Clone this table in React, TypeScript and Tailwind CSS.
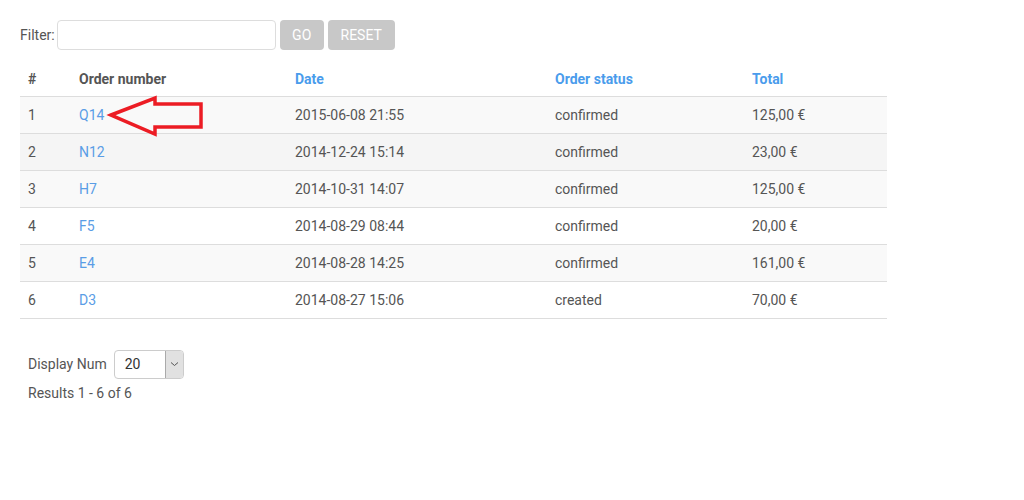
import React from "react";

const rows = [
  { n: 1, o: "Q14", d: "2015-06-08 21:55", s: "confirmed", t: "125,00 €", bg: "bg-[#f9f9f9]" },
  { n: 2, o: "N12", d: "2014-12-24 15:14", s: "confirmed", t: "23,00 €", bg: "bg-[#f5f5f5]" },
  { n: 3, o: "H7", d: "2014-10-31 14:07", s: "confirmed", t: "125,00 €", bg: "bg-[#f9f9f9]" },
  { n: 4, o: "F5", d: "2014-08-29 08:44", s: "confirmed", t: "20,00 €", bg: "bg-white" },
  { n: 5, o: "E4", d: "2014-08-28 14:25", s: "confirmed", t: "161,00 €", bg: "bg-[#f9f9f9]" },
  { n: 6, o: "D3", d: "2014-08-27 15:06", s: "created", t: "70,00 €", bg: "bg-white" },
];

export default function App() {
  return (
    <div className="relative w-[1024px] h-[500px] bg-white text-[14px] text-[#555] font-['Roboto',sans-serif]">
      <div className="pt-[20px] pl-[20px]">
        <div className="flex items-center h-[30px]">
          <span className="text-[#555] mr-[2px]">Filter:</span>
          <input className="w-[219px] h-[30px] border border-[#ddd] rounded-[4px] bg-white" />
          <button className="ml-[4px] w-[44px] h-[30px] rounded-[4px] bg-[#c8c8c8] text-white">GO</button>
          <button className="ml-[4px] w-[67px] h-[30px] rounded-[4px] bg-[#c8c8c8] text-white">RESET</button>
        </div>
        <table className="mt-[10px] w-[867px] border-collapse">
          <thead>
            <tr className="h-[36px] border-b border-[#ddd] text-left">
              <th className="w-[51px] px-[8px] pt-[3px] font-bold text-[#555]">#</th>
              <th className="w-[216px] px-[8px] pt-[3px] font-bold text-[#555]">Order number</th>
              <th className="w-[260px] px-[8px] pt-[3px] font-bold text-[#4a9cec]">Date</th>
              <th className="w-[197px] px-[8px] pt-[3px] font-bold text-[#4a9cec]">Order status</th>
              <th className="px-[8px] pt-[3px] font-bold text-[#4a9cec]">Total</th>
            </tr>
          </thead>
          <tbody>
            {rows.map((r) => (
              <tr key={r.n} className={`h-[37px] border-b border-[#ddd] ${r.bg}`}>
                <td className="px-[8px] pt-[2px]">{r.n}</td>
                <td className="px-[8px] pt-[2px] text-[#5a9de6]">{r.o}</td>
                <td className="px-[8px] pt-[2px]">{r.d}</td>
                <td className="px-[8px] pt-[2px]">{r.s}</td>
                <td className="px-[8px] pt-[2px]">{r.t}</td>
              </tr>
            ))}
          </tbody>
        </table>
        <div className="mt-[31px] pl-[8px]">
          <div className="flex items-center h-[29px]">
            <span>Display Num</span>
            <div className="ml-[7px] flex w-[70px] h-[29px] border border-[#ccc] rounded-[4px] overflow-hidden bg-white">
              <span className="flex-1 pl-[10px] leading-[27px] text-[#333]">20</span>
              <span className="w-[18px] border-l border-[#aaa] bg-[#e1e1e1] flex items-center justify-center">
                <svg width="9" height="6" viewBox="0 0 9 6"><path d="M1 1.5 L4.5 4.5 L8 1.5" fill="none" stroke="#555" strokeWidth="1" /></svg>
              </span>
            </div>
          </div>
          <div className="mt-[4px]">Results 1 - 6 of 6</div>
        </div>
      </div>
      <svg className="absolute left-0 top-0" width="220" height="150" viewBox="0 0 220 150">
        <polygon points="111,115 155,98 155,104 201,104 201,127 155,127 155,134" fill="none" stroke="#ec1c24" strokeWidth="3.5" strokeLinejoin="miter" />
      </svg>
    </div>
  );
}
